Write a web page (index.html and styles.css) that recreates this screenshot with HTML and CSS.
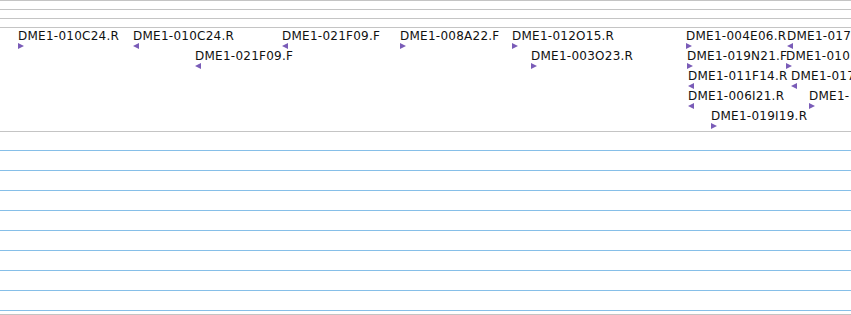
FILE: index.html
```html
<!DOCTYPE html>
<html lang="en">
<head>
    <meta charset="UTF-8">
    <title>Clone track</title>
    <link rel="stylesheet" href="styles.css">
</head>
<body>
    <!-- Шкала сверху -->
    <div class="ruler">
        <div class="rulerRow"></div>
        <div class="rulerRow"></div>
        <div class="rulerRow"></div>
    </div>

    <!-- Трек с клонами -->
    <div class="track">
        <div class="clone" style="left: 18px; top: 1px;"><span class="name">DME1-010C24.R</span><i class="fwd"></i></div>
        <div class="clone" style="left: 133px; top: 1px;"><span class="name">DME1-010C24.R</span><i class="rev"></i></div>
        <div class="clone" style="left: 282px; top: 1px;"><span class="name">DME1-021F09.F</span><i class="rev"></i></div>
        <div class="clone" style="left: 400px; top: 1px;"><span class="name">DME1-008A22.F</span><i class="fwd"></i></div>
        <div class="clone" style="left: 512px; top: 1px;"><span class="name">DME1-012O15.R</span><i class="fwd"></i></div>
        <div class="clone" style="left: 686px; top: 1px;"><span class="name">DME1-004E06.R</span><i class="fwd"></i></div>
        <div class="clone" style="left: 787px; top: 1px;"><span class="name">DME1-017</span><i class="rev"></i></div>

        <div class="clone" style="left: 195px; top: 21px;"><span class="name">DME1-021F09.F</span><i class="rev"></i></div>
        <div class="clone" style="left: 531px; top: 21px;"><span class="name">DME1-003O23.R</span><i class="fwd"></i></div>
        <div class="clone" style="left: 687px; top: 21px;"><span class="name">DME1-019N21.F</span><i class="fwd"></i></div>
        <div class="clone" style="left: 786px; top: 21px;"><span class="name">DME1-010</span><i class="fwd"></i></div>

        <div class="clone" style="left: 688px; top: 41px;"><span class="name">DME1-011F14.R</span><i class="rev"></i></div>
        <div class="clone" style="left: 791px; top: 41px;"><span class="name">DME1-017</span><i class="rev"></i></div>

        <div class="clone" style="left: 688px; top: 61px;"><span class="name">DME1-006I21.R</span><i class="rev"></i></div>
        <div class="clone" style="left: 809px; top: 61px;"><span class="name">DME1-</span><i class="fwd"></i></div>

        <div class="clone" style="left: 711px; top: 81px;"><span class="name">DME1-019I19.R</span><i class="fwd"></i></div>
    </div>

    <!-- Пустые дорожки -->
    <div class="lanes">
        <div class="lane"></div>
        <div class="lane"></div>
        <div class="lane"></div>
        <div class="lane"></div>
        <div class="lane"></div>
        <div class="lane"></div>
        <div class="lane"></div>
        <div class="lane"></div>
        <div class="lane"></div>
    </div>
</body>
</html>
```

FILE: styles.css
```css
/* Основной стиль */
body {
    margin: 0;
    padding: 0;
    background-color: #fff;
    font-family: "DejaVu Sans", sans-serif;
    font-size: 12px;
    color: #111;
    overflow: hidden;
}

/* Шкала */
.ruler {
    border-bottom: 1px solid #c4c4c4;
}

.rulerRow {
    box-sizing: border-box;
    height: 9px;
    border-top: 1px solid #c4c4c4;
}

/* Трек */
.track {
    position: relative;
    height: 103px;
    border-bottom: 1px solid #c4c4c4;
    overflow: hidden;
}

.clone {
    position: absolute;
    display: flex;
    flex-direction: column;
    align-items: flex-start;
    white-space: nowrap;
}

.name {
    line-height: 14px;
    letter-spacing: 0.25px;
}

.fwd,
.rev {
    width: 0;
    height: 0;
    border-top: 3px solid transparent;
    border-bottom: 3px solid transparent;
}

.fwd {
    border-left: 6px solid #7a5cb8;
}

.rev {
    border-right: 6px solid #7a5cb8;
}

/* Дорожки */
.lanes {
    padding-top: 18px;
    border-bottom: 1px solid #c4c4c4;
}

.lane {
    box-sizing: border-box;
    height: 20px;
    border-top: 1px solid #86bfe8;
}

.lane:last-child {
    height: 4px;
}
```
